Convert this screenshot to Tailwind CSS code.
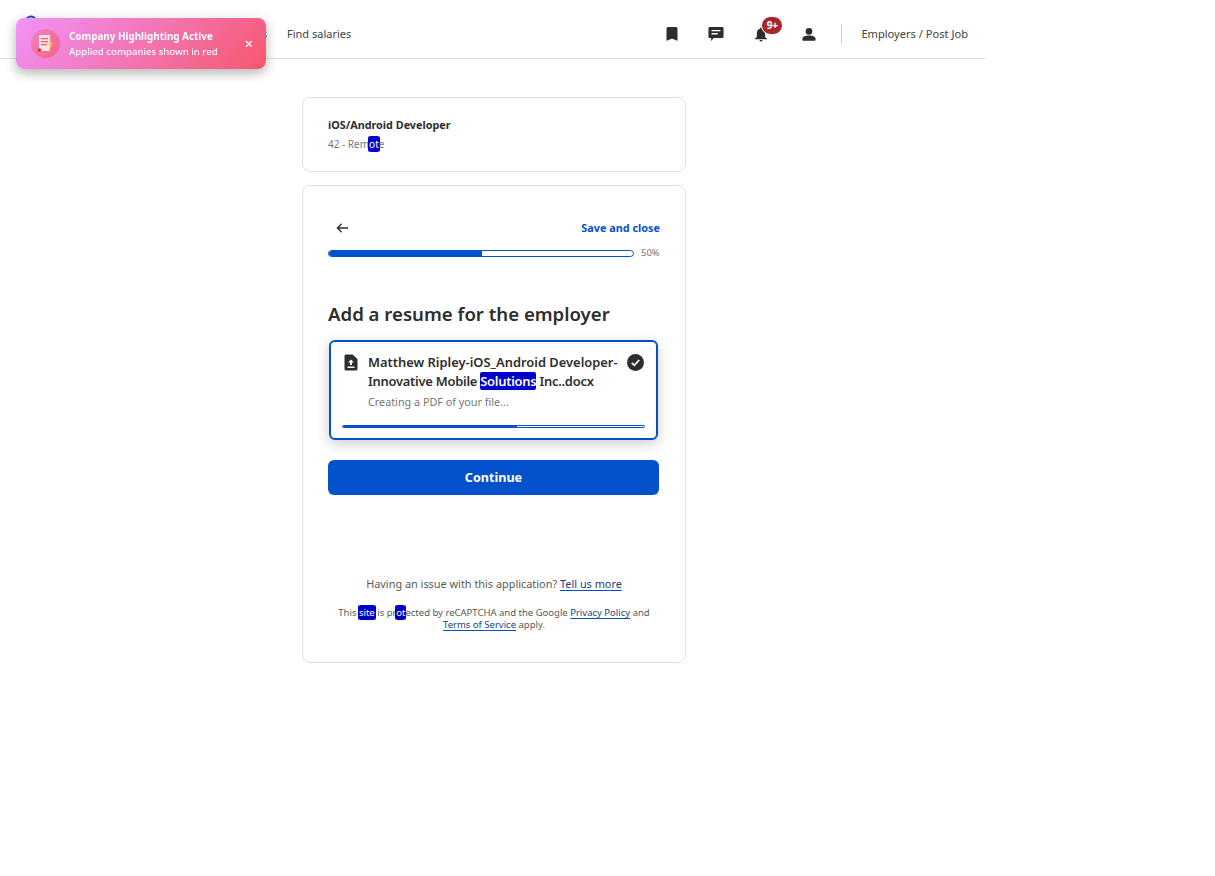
<!DOCTYPE html>
<html lang="en">
<head>
    <meta charset="UTF-8">
    <meta name="viewport" content="width=device-width, initial-scale=1.0">
    <title>Add a resume</title>
    <script src="https://cdn.jsdelivr.net/npm/@tailwindcss/browser@4"></script>
</head>
<body class="bg-white font-['Noto_Sans',sans-serif] text-[#2d2d2d]">

    <div class="w-[986px] min-h-[876px]">

        <!-- top nav -->
        <header class="flex items-center h-[59px] border-b border-[#e4e2e0] pt-[10px] pl-[20px] pr-[18px]">
            <svg class="w-[20px] h-[20px] mb-[24px] ml-[1px]" viewBox="0 0 20 20"><path d="M4.500 10a5.500 5.500 0 0 1 11 0" fill="none" stroke="#1f4fb0" stroke-width="2"/></svg>
            <nav class="flex items-center gap-[20px] ml-[20px] text-[11px] text-[#424242]">
                <span class="w-[206px] text-right">Company reviews</span>
                <span>Find salaries</span>
            </nav>
            <div class="flex items-center ml-auto">
                <!-- bookmark -->
                <svg class="w-[12px] h-[14px] mr-[30px]" viewBox="0 0 12 14"><path d="M2 0h8a1.500 1.500 0 0 1 1.500 1.500V13q0 1-1 .6L6 11.500 1.500 13.600q-1 .4-1-.6V1.500A1.500 1.500 0 0 1 2 0z" fill="#2d2d2d"/></svg>
                <!-- messages -->
                <svg class="w-[16px] h-[16px] mr-[30px]" viewBox="0 0 18 18"><path d="M2 1h14a1.500 1.500 0 0 1 1.500 1.500V12a1.500 1.500 0 0 1-1.500 1.500H6.500L3.500 17v-3.500H2A1.500 1.500 0 0 1 .5 12V2.500A1.500 1.500 0 0 1 2 1z" fill="#2d2d2d"/><path d="M4 4.500h10v1.500H4zM4 8h7v1.500H4z" fill="#fff"/></svg>
                <!-- notifications -->
                <div class="relative mr-[34px] w-[14px] h-[15px]">
                    <svg class="w-[14px] h-[15px]" viewBox="0 0 16 18"><path d="M8 0.500a1.200 1.200 0 0 1 1.200 1.200v.5C11.600 2.800 13 4.900 13 7.400V12l2.500 2v.8H.5V14L3 12V7.400C3 4.900 4.400 2.800 6.800 2.200v-.5A1.200 1.200 0 0 1 8 .5zM6.200 15.700h3.600a1.800 1.800 0 0 1-3.600 0z" fill="#2d2d2d"/></svg>
                    <span class="absolute left-[7px] top-[-11px] flex items-center justify-center w-[22px] h-[19px] rounded-full bg-[#a9252b] border border-white text-[10px] font-bold text-white">9+</span>
                </div>
                <!-- profile -->
                <svg class="w-[14px] h-[15px] mr-[25px]" viewBox="0 0 16 16"><circle cx="8" cy="4.500" r="3.800" fill="#2d2d2d"/><path d="M1.500 15a1 1 0 0 1-1-1v-1c0-2.500 3.500-3.800 7.500-3.800s7.500 1.300 7.500 3.800v1a1 1 0 0 1-1 1z" fill="#2d2d2d"/></svg>
                <div class="w-px h-[20px] bg-[#d4d2d0] mr-[19px]"></div>
                <span class="text-[11.100px] text-[#424242]">Employers / Post Job</span>
            </div>
        </header>

        <main class="flex flex-col items-center pl-[2px] pt-[38px] gap-[13px]">

            <!-- job summary -->
            <section class="w-[384px] h-[75px] border border-[#e4e2e0] rounded-[8px] pl-[25px] pt-[19px]">
                <h2 class="text-[10.800px] leading-[15px] font-bold">iOS/Android Developer</h2>
                <p class="mt-[5px] text-[10px] leading-[14px] text-[#767676]">42 - Rem<span class="bg-[#0000cc] text-white rounded-[2px] py-[1px] shadow-[1px_0_0_#0000cc,-1px_0_0_#0000cc]">ot</span>e</p>
            </section>

            <!-- application step -->
            <section class="w-[384px] h-[478px] border border-[#e4e2e0] rounded-[8px] px-[25px] pt-[32px]">
                <div class="flex items-center justify-between h-[20px]">
                    <svg class="w-[13px] h-[12px] ml-[8px]" viewBox="0 0 14 12"><path d="M13 6H1.500M6 1.500 1.500 6 6 10.500" fill="none" stroke="#2d2d2d" stroke-width="1.400"/></svg>
                    <a class="text-[10.850px] font-bold text-[#0451cc]">Save and close</a>
                </div>
                <div class="flex items-center mt-[8px] h-[14px]">
                    <div class="w-[306px] h-[7px] rounded-full border-[1.500px] border-[#0451cc] overflow-hidden">
                        <div class="w-[153px] h-full bg-[#0451cc]"></div>
                    </div>
                    <span class="ml-[7px] text-[9.500px] text-[#767676]">50%</span>
                </div>

                <h1 class="mt-[41px] text-[18.600px] leading-[26px] font-semibold">Add a resume for the employer</h1>

                <!-- uploaded file -->
                <div class="relative mt-[13px] ml-[1px] w-[329px] h-[100px] border-2 border-[#0451cc] rounded-[6px] bg-white shadow-[0_4px_14px_rgba(0,0,0,0.2)] pl-[13px] pr-[12px] pt-[11px]">
                    <div class="flex">
                        <svg class="w-[14px] h-[17px] mt-[1px] shrink-0" viewBox="0 0 14 17"><path d="M2 .5h6.500L13.500 5v10a1.500 1.500 0 0 1-1.500 1.500H2A1.500 1.500 0 0 1 .5 15V2A1.500 1.500 0 0 1 2 .5z" fill="#2d2d2d"/><path d="M7 5.500 10 8.500H8V11H6V8.500H4zM3.500 12.500h7V14h-7z" fill="#fff"/></svg>
                        <div class="ml-[10px] w-[255px]">
                            <p class="text-[12.900px] leading-[19px] font-semibold">Matthew Ripley-iOS_Android Developer-<span class="tracking-[-0.24px]">Innovative Mobile <span class="bg-[#0000cc] text-white rounded-[2px]">Solutions</span> Inc..docx</span></p>
                            <p class="mt-[3px] text-[10.800px] leading-[15px] text-[#767676]">Creating a PDF of your file...</p>
                        </div>
                        <svg class="w-[17px] h-[17px] mt-[1px] ml-auto shrink-0" viewBox="0 0 17 17"><circle cx="8.500" cy="8.500" r="8.500" fill="#2d2d2d"/><path d="M4.800 8.800 7.300 11.300 12.200 6" fill="none" stroke="#fff" stroke-width="1.800"/></svg>
                    </div>
                    <div class="absolute left-[11px] bottom-[10px] w-[303px] h-[3px] rounded-full border border-[#0451cc] bg-white overflow-hidden">
                        <div class="w-[174px] h-full bg-[#0451cc]"></div>
                    </div>
                </div>

                <button class="mt-[20px] w-[331px] h-[35px] pt-[1px] rounded-[6px] bg-[#0451cc] text-[12.600px] font-bold text-white">Continue</button>

                <p class="mt-[81px] text-center text-[10.900px] leading-[15px] text-[#595959]">Having an issue with this application? <a class="text-[#24407a] underline decoration-[#0451cc] underline-offset-2">Tell us more</a></p>
                <p class="mt-[16px] text-center text-[9.500px] leading-[12px] text-[#595959]">This <span class="bg-[#0000cc] text-white rounded-[2px] py-[1px] shadow-[1px_0_0_#0000cc,-1px_0_0_#0000cc]">site</span> is pr<span class="bg-[#0000cc] text-white rounded-[2px] py-[1px] shadow-[1px_0_0_#0000cc,-1px_0_0_#0000cc]">ot</span>ected by reCAPTCHA and the Google <a class="text-[#24407a] underline decoration-[#0451cc] underline-offset-2">Privacy Policy</a> and <a class="text-[#24407a] underline decoration-[#0451cc] underline-offset-2">Terms of Service</a> apply.</p>
            </section>
        </main>
    </div>

    <!-- extension toast -->
    <div class="fixed left-[16px] top-[18px] flex items-center w-[250px] h-[51px] rounded-[8px] bg-[linear-gradient(135deg,#f093fb,#f5576c)] shadow-[0_4px_12px_rgba(0,0,0,0.3)] pl-[15px] pr-[13px]">
        <div class="flex items-center justify-center w-[29px] h-[29px] rounded-full bg-[linear-gradient(135deg,#f27fc4,#f4647f)] shrink-0">
            <svg class="w-[17px] h-[19px]" viewBox="0 0 17 19"><path d="M2 1h11v16H2z" fill="#fde4df"/><path d="M4 4h7v1.200H4zM4 7h7v1.200H4zM4 10h6v1.200H4z" fill="#ee5a80"/><path d="M15 4 11.500 11h2l-2 7 4.500-9h-2z" fill="#f5b942"/><circle cx="2.500" cy="16" r="1.800" fill="#d6304f"/></svg>
        </div>
        <div class="ml-[9px] text-white">
            <p class="text-[9.900px] leading-[15px] font-bold">Company Highlighting Active</p>
            <p class="text-[9.600px] leading-[15px] font-medium">Applied companies shown in red</p>
        </div>
        <span class="ml-auto text-[15px] font-medium text-white">×</span>
    </div>

</body>
</html>
